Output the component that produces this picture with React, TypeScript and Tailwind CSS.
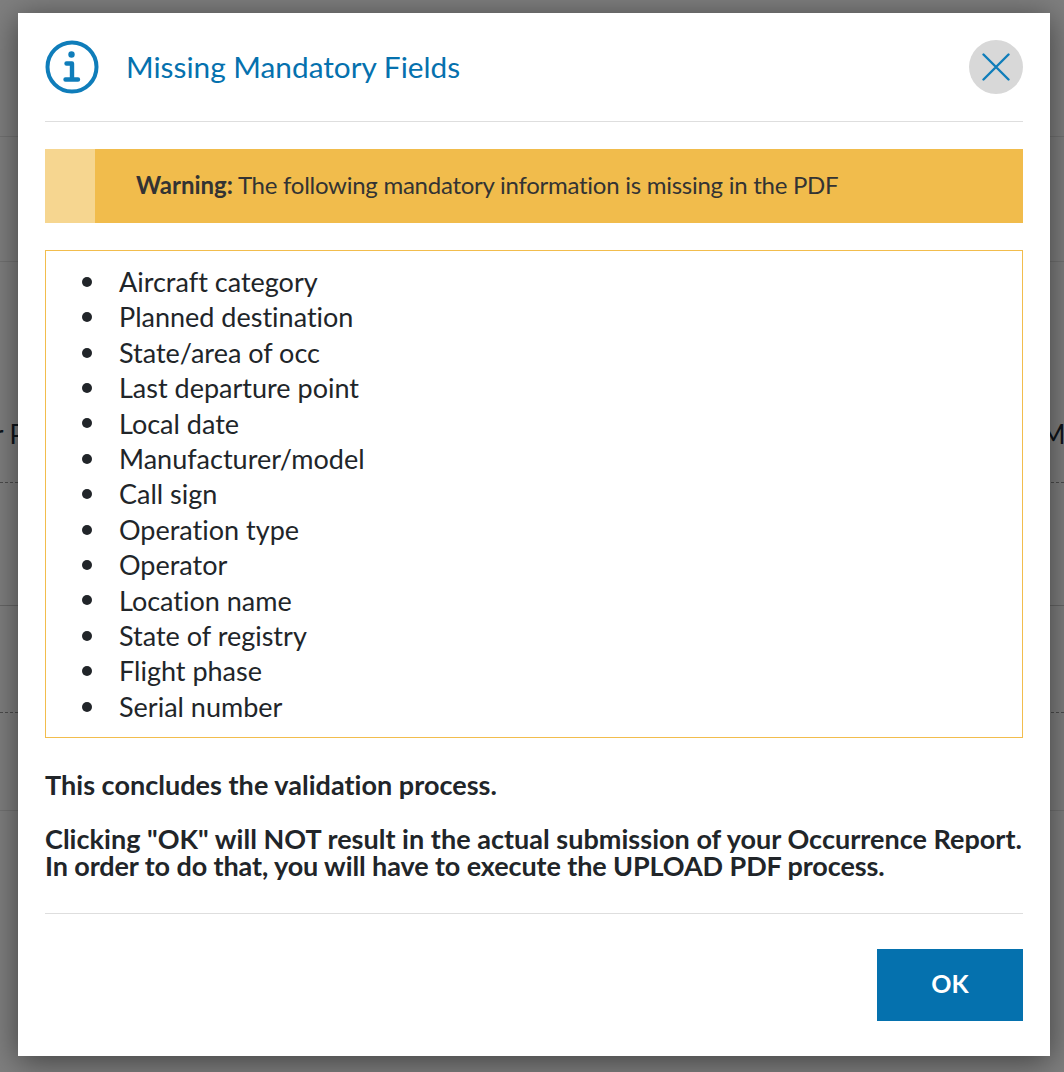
const fields = [
  'Aircraft category',
  'Planned destination',
  'State/area of occ',
  'Last departure point',
  'Local date',
  'Manufacturer/model',
  'Call sign',
  'Operation type',
  'Operator',
  'Location name',
  'State of registry',
  'Flight phase',
  'Serial number',
];

function InfoIcon() {
  return (
    <svg width="54" height="54" viewBox="0 0 54 54" fill="none" stroke="#0f7dba" className="shrink-0">
      <circle cx="27" cy="27" r="24.5" strokeWidth="4" />
      <circle cx="26.5" cy="14.5" r="3.2" fill="#0f7dba" stroke="none" />
      <path d="M21.5 23.5H27V39M20.5 39.5H33" strokeWidth="4.4" strokeLinecap="round" strokeLinejoin="round" />
    </svg>
  );
}

function CloseIcon() {
  return (
    <svg width="28" height="28" viewBox="0 0 28 28" fill="none" stroke="#0f7dba" strokeWidth="2.4" strokeLinecap="round">
      <path d="M1.5 1.5L26.5 26.5M26.5 1.5L1.5 26.5" />
    </svg>
  );
}

// Page behind the dialog, mostly hidden by it
function BackgroundPage() {
  return (
    <div className="h-[1072px] overflow-hidden bg-white font-['Lato',sans-serif] text-[26px] text-[#1c2b36]">
      <div className="h-[137px] border-b border-[#e4e4e4]" />
      <div className="h-[125px] border-b border-[#e4e4e4]" />
      <div className="flex h-[221px] items-center justify-between border-b border-dashed border-[#999999] pt-[124px]">
        <span className="-ml-[6px]">r P</span>
        <span className="-mr-[14px]">Ma</span>
      </div>
      <div className="h-[123px] border-b border-[#cccccc]" />
      <div className="h-[107px] border-b border-dashed border-[#999999]" />
      <div className="h-[98px] border-b border-[#e4e4e4]" />
    </div>
  );
}

export default function App() {
  return (
    <div className="relative h-[1072px] w-full overflow-hidden">
      <BackgroundPage />
      <div className="absolute inset-0 bg-black/50" />
      <div className="absolute left-[18px] top-[13px] flex h-[1043px] w-[1032px] flex-col bg-white px-[27px] pt-[27px] font-['Lato',sans-serif] text-[#212529] shadow-[0_5px_30px_rgba(0,0,0,0.5)] [font-variant-ligatures:none]">
        <div className="flex h-[82px] items-start justify-between border-b border-[#dedede]">
          <div className="flex h-[54px] items-center gap-[28px]">
            <InfoIcon />
            <h1 className="-ml-[1px] -mt-[1px] text-[29.8px] leading-none text-[#0571ae]">Missing Mandatory Fields</h1>
          </div>
          <button className="flex h-[54px] w-[54px] items-center justify-center rounded-full bg-[#d8d8d8]">
            <CloseIcon />
          </button>
        </div>

        <div className="mt-[27px] flex h-[74px] bg-[#f1bc4c]">
          <div className="w-[50px] bg-[#f6d690]" />
          <p className="flex items-center pb-[2px] pl-[41px] text-[24px] text-[#333333]">
            <strong className="mr-[5px] font-bold">Warning:</strong>
            <span className="tracking-[-0.26px]">The following mandatory information is missing in the PDF</span>
          </p>
        </div>

        <ul className="mt-[27px] flex h-[488px] flex-col border border-[#f2bd4d] pt-[13px] pl-[36px] text-[27px] leading-[35.4px]">
          {fields.map((field) => (
            <li key={field} className="flex items-center gap-[27px]">
              <span className="h-[10px] w-[10px] shrink-0 rounded-full bg-[#212529]" />
              {field}
            </li>
          ))}
        </ul>

        <div className="mt-[33px] text-[27px] font-bold leading-[27px]">
          <p className="tracking-[0.03px]">This concludes the validation process.</p>
          <p className="mt-[27px] tracking-[0.025px]">Clicking "OK" will NOT result in the actual submission of your Occurrence Report.</p>
          <p className="tracking-[-0.1px]">In order to do that, you will have to execute the UPLOAD PDF process.</p>
        </div>

        <div className="mt-[34px] flex justify-end border-t border-[#dedede] pt-[35px]">
          <button className="h-[72px] w-[146px] bg-[#0571ae] pb-[2px] text-[25px] font-bold text-white">OK</button>
        </div>
      </div>
    </div>
  );
}
